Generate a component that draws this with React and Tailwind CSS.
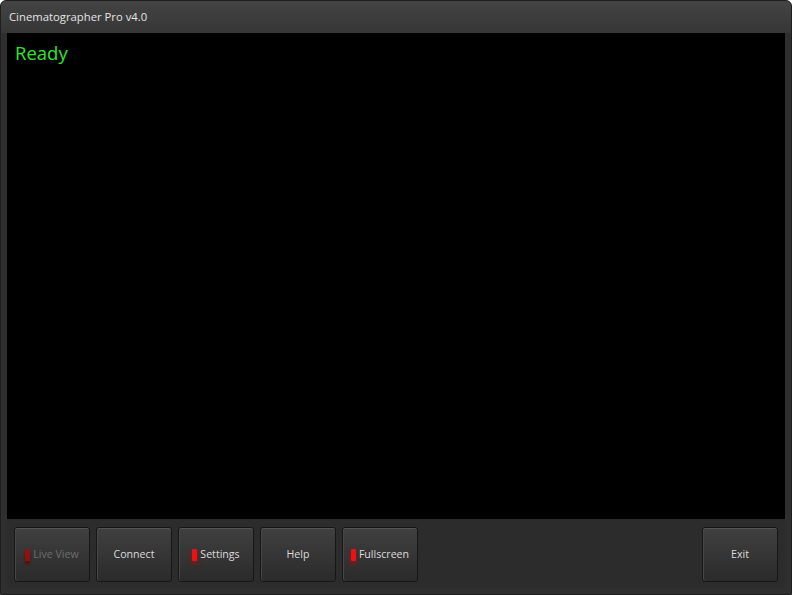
import React from "react";

const font = { fontFamily: '"Segoe UI", "Open Sans", "Noto Sans", sans-serif' };

function Btn({ label, led, disabled }) {
  return (
    <div
      className="w-[76px] h-[55px] rounded-[3px] border border-[#161616] bg-gradient-to-b from-[#404040] to-[#2b2b2b] shadow-[inset_0_1px_0_#555,inset_1px_0_0_#474747] flex items-center justify-center gap-[3px]"
    >
      {led && (
        <span
          className={
            "w-[5px] h-[12px] rounded-[1px] " +
            (disabled
              ? "bg-[#8a1414] shadow-[0_3px_3px_#5a0a0a]"
              : "bg-[#ee1111] shadow-[0_3px_4px_#991010]")
          }
        />
      )}
      <span
        className={
          "text-[10.6px] leading-none " +
          (disabled ? "text-[#6e6e6e]" : "text-[#dcdcdc]")
        }
      >
        {label}
      </span>
    </div>
  );
}

export default function App() {
  return (
    <div
      style={font}
      className="w-[792px] h-[595px] bg-[#2f2f2f] flex flex-col rounded-t-[6px] overflow-hidden border border-[#1e1e1e]"
    >
      <div className="h-[32px] shrink-0 bg-gradient-to-b from-[#444] to-[#363636] flex items-center pl-[8px]">
        <span className="text-[11.3px] text-[#e4e4e4]">Cinematographer Pro v4.0</span>
      </div>
      <div className="flex-1 flex flex-col px-[6px] pb-[6px]">
        <div className="flex-1 bg-black pl-[8px] pt-[8px]">
          <span className="text-[18.5px] leading-[24px] text-[#2ee62e]">Ready</span>
        </div>
        <div className="h-[69px] shrink-0 bg-[#2c2c2c] flex items-start pt-[8px] pl-[7px] pr-[7px] gap-[6px]">
          <Btn label="Live View" led disabled />
          <Btn label="Connect" />
          <Btn label="Settings" led />
          <Btn label="Help" />
          <Btn label="Fullscreen" led />
          <div className="flex-1" />
          <Btn label="Exit" />
        </div>
      </div>
    </div>
  );
}
